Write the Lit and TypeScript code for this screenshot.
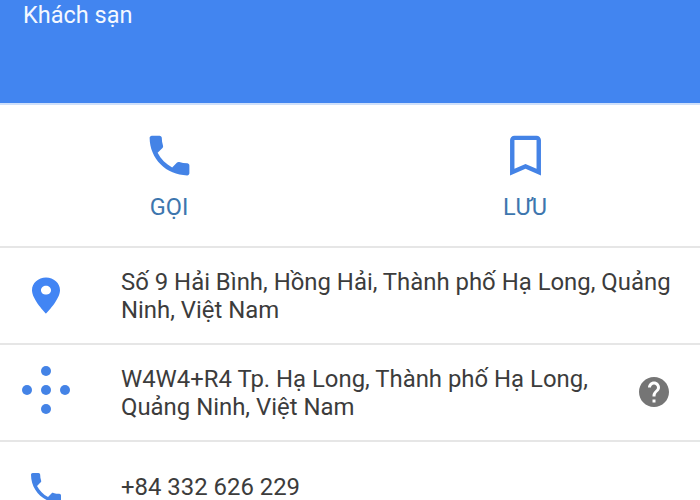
import { LitElement, html, css } from 'lit';
import { customElement } from 'lit/decorators.js';

const PHONE =
  'M6.62 10.79c1.44 2.83 3.76 5.14 6.59 6.59l2.2-2.2c.27-.27.67-.36 1.02-.24 1.12.37 2.33.57 3.57.57.55 0 1 .45 1 1V20c0 .55-.45 1-1 1-9.39 0-17-7.61-17-17 0-.55.45-1 1-1h3.5c.55 0 1 .45 1 1 0 1.25.2 2.45.57 3.57.11.35.03.74-.25 1.02l-2.2 2.2z';
const BOOKMARK =
  'M17 3H7c-1.1 0-1.99.9-1.99 2L5 21l7-3 7 3V5c0-1.1-.9-2-2-2zm0 15l-5-2.18L7 18V5h10v13z';
const PIN =
  'M12 2C8.13 2 5 5.13 5 9c0 5.25 7 13 7 13s7-7.75 7-13c0-3.87-3.13-7-7-7zm0 9.5c-1.38 0-2.5-1.12-2.5-2.5s1.12-2.5 2.5-2.5 2.5 1.12 2.5 2.5-1.12 2.5-2.5 2.5z';
const HELP =
  'M12 2C6.48 2 2 6.48 2 12s4.48 10 10 10 10-4.48 10-10S17.52 2 12 2zm1 17h-2v-2h2v2zm2.07-7.75l-.9.92C13.45 12.9 13 13.5 13 15h-2v-.5c0-1.1.45-2.1 1.17-2.83l1.24-1.26c.37-.36.59-.86.59-1.41 0-1.1-.9-2-2-2s-2 .9-2 2H8c0-2.21 1.79-4 4-4s4 1.79 4 4c0 .88-.36 1.68-.93 2.25z';

@customElement('app-root')
export class AppRoot extends LitElement {
  static styles = css`
    :host {
      display: block;
      width: 700px;
      height: 500px;
      overflow: hidden;
      background: #fff;
      font-family: Roboto, 'Liberation Sans', sans-serif;
      color: #3c3c3c;
    }

    .header {
      box-sizing: border-box;
      height: 105px;
      padding: 1px 0 0 23px;
      background: #4285f0;
      border-bottom: 2px solid #cfe0fa;
      color: #f4f8ff;
      font-size: 23.5px;
      line-height: 28px;
    }

    .actions {
      box-sizing: border-box;
      display: grid;
      grid-template-columns: 338px 350px;
      column-gap: 12px;
      height: 143px;
      padding-top: 24px;
      border-bottom: 2px solid #e6e6e6;
    }

    .action {
      display: flex;
      flex-direction: column;
      align-items: center;
      color: #3d76ae;
      font-size: 23.5px;
      line-height: 26px;
    }

    .action svg {
      width: 53px;
      height: 53px;
      fill: #4483e6;
      margin-bottom: 12px;
    }

    .row {
      box-sizing: border-box;
      display: flex;
      align-items: center;
      height: 97px;
      border-bottom: 2px solid #e6e6e6;
    }

    .row.last {
      border-bottom: none;
      align-items: flex-start;
      padding-top: 31px;
    }

    .icon {
      flex: none;
      display: flex;
      align-items: center;
      justify-content: center;
      width: 92px;
      margin-right: 29px;
    }

    .pin {
      width: 48px;
      height: 43px;
      fill: #4285f4;
    }

    .phone {
      width: 30px;
      height: 30px;
      fill: #4483e6;
    }

    .dots {
      width: 50px;
      height: 50px;
      margin-bottom: 6px;
      fill: #4483e6;
    }

    .text {
      font-size: 23.9px;
      line-height: 28px;
      flex: 1;
    }

    .help {
      flex: none;
      width: 36px;
      height: 36px;
      margin: 0 28px 2px 0;
      fill: #757575;
    }
  `;

  render() {
    return html`
      <div class="header">Khách sạn</div>
      <div class="actions">
        <div class="action">
          <svg viewBox="0 0 24 24"><path d="${PHONE}"></path></svg>
          GỌI
        </div>
        <div class="action">
          <svg viewBox="0 0 24 24"><path d="${BOOKMARK}"></path></svg>
          LƯU
        </div>
      </div>
      <div class="row">
        <div class="icon">
          <svg class="pin" viewBox="0 0 24 24" preserveAspectRatio="none">
            <path fill-rule="evenodd" d="${PIN}"></path>
          </svg>
        </div>
        <div class="text">
          Số 9 Hải Bình, Hồng Hải, Thành phố Hạ Long, Quảng<br />Ninh, Việt Nam
        </div>
      </div>
      <div class="row">
        <div class="icon">
          <svg class="dots" viewBox="0 0 50 50">
            <circle cx="25" cy="6" r="5"></circle>
            <circle cx="6" cy="25" r="5"></circle>
            <circle cx="25" cy="25" r="5"></circle>
            <circle cx="44" cy="25" r="5"></circle>
            <circle cx="25" cy="44" r="5"></circle>
          </svg>
        </div>
        <div class="text">
          W4W4+R4 Tp. Hạ Long, Thành phố Hạ Long,<br />Quảng Ninh, Việt Nam
        </div>
        <svg class="help" viewBox="0 0 24 24"><path d="${HELP}"></path></svg>
      </div>
      <div class="row last">
        <div class="icon">
          <svg class="phone" viewBox="3 3 18 18"><path d="${PHONE}"></path></svg>
        </div>
        <div class="text">+84 332 626 229</div>
      </div>
    `;
  }
}
